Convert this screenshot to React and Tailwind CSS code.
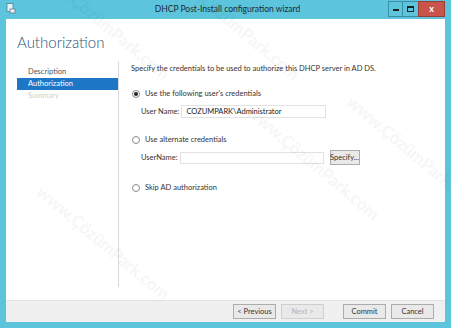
import React from 'react';

const font = { fontFamily: 'Lato, "Open Sans", sans-serif' };

function Radio({ checked }) {
  return (
    <span className="w-[8px] h-[8px] rounded-full border border-[#8a8a8a] bg-white flex items-center justify-center shrink-0">
      {checked && <span className="w-[4px] h-[4px] rounded-full bg-[#222]" />}
    </span>
  );
}

function Btn({ children, disabled }) {
  return (
    <div className={`w-[43px] h-[15px] border ${disabled ? 'border-[#cfcfcf] text-[#b5b5b5]' : 'border-[#acacac] text-[#333]'} bg-[#e9e9e9] flex items-center justify-center text-[7.5px]`}>
      {children}
    </div>
  );
}

export default function App() {
  const marks = [
    { x: 20, y: 10 }, { x: 150, y: 10 }, { x: 230, y: 150 }, { x: 330, y: 140 }, { x: 20, y: 230 },
  ];

  return (
    <div className="w-[451px] h-[328px] bg-[#5cc4dd] flex flex-col px-[6px] pb-[6px] relative overflow-hidden" style={font}>
      {/* title bar */}
      <div className="h-[19px] flex items-center relative shrink-0">
        <svg width="10" height="11" viewBox="0 0 10 11" className="absolute left-[0px] top-[3px]">
          <rect x="1" y="0.5" width="6" height="8" fill="#dff3f8" stroke="#5a7f8c" strokeWidth="0.8" />
          <rect x="4" y="6" width="5" height="4" fill="#eef" stroke="#5a7f8c" strokeWidth="0.8" />
        </svg>
        <div className="flex-1 text-center text-[8.5px] text-[#1b2b33] pl-[4px]">DHCP Post-Install configuration wizard</div>
        <div className="absolute right-0 top-[1px] flex h-[16px]">
          <div className="w-[15px] border border-[#3d8ea3] flex items-end justify-center pb-[5px]">
            <span className="w-[6px] h-[2px] bg-[#222]" />
          </div>
          <div className="w-[15px] border-y border-[#3d8ea3] flex items-center justify-center">
            <span className="w-[7px] h-[6px] border-[1.5px] border-[#222] border-t-2" />
          </div>
          <div className="w-[27px] bg-[#c9544b] border border-[#9b3c35] flex items-center justify-center text-[9px] font-bold text-[#fff]">x</div>
        </div>
      </div>

      <div className="flex-1 bg-white flex flex-col">
        <div className="h-[43px] pl-[11px] pt-[13px] shrink-0">
          <div className="text-[15px] font-light text-[#2c5379] leading-[20px]">Authorization</div>
        </div>

        <div className="flex-1 flex">
          <div className="w-[112px] pl-[11px] pt-[4px] flex flex-col text-[7.5px]">
            <div className="h-[12px] flex items-center pl-[11px] text-[#555]">Description</div>
            <div className="h-[12px] flex items-center pl-[11px] bg-[#1e76c6] text-white">Authorization</div>
            <div className="h-[12px] flex items-center pl-[11px] text-[#cfcfcf]">Summary</div>
          </div>
          <div className="w-px bg-[#d8d8d8] mb-[13px]" />
          <div className="flex-1 pl-[12px] pt-[2px] text-[7.5px] text-[#333] flex flex-col whitespace-nowrap">
            <div className="h-[10px] flex items-center">Specify the credentials to be used to authorize this DHCP server in AD DS.</div>

            <div className="mt-[15px] h-[10px] flex items-center gap-[5px] pl-[1px]">
              <Radio checked />
              <span>Use the following user's credentials</span>
            </div>
            <div className="mt-[6px] flex items-center pl-[10px]">
              <span className="mr-[2px]">User Name:</span>
              <div className="w-[145px] h-[13px] border border-[#e2e2e2] flex items-center pl-[4px] text-[#222]">COZUMPARK\Administrator</div>
            </div>

            <div className="mt-[17px] h-[10px] flex items-center gap-[5px] pl-[1px]">
              <Radio />
              <span>Use alternate credentials</span>
            </div>
            <div className="mt-[5px] flex items-center pl-[10px]">
              <span className="mr-[2px]">UserName:</span>
              <div className="w-[144px] h-[12px] border border-[#e2e2e2]" />
              <div className="ml-[6px] w-[30px] h-[15px] border border-[#acacac] bg-[#e9e9e9] flex items-center justify-center">Specify...</div>
            </div>

            <div className="mt-[18px] h-[10px] flex items-center gap-[5px] pl-[1px]">
              <Radio />
              <span>Skip AD authorization</span>
            </div>
          </div>
        </div>

        <div className="h-[22px] bg-[#f0f0f0] border-t border-[#e3e3e3] flex items-center justify-end pr-[11px] shrink-0">
          <Btn>&lt; Previous</Btn>
          <div className="ml-[5px]"><Btn disabled>Next &gt;</Btn></div>
          <div className="ml-[19px]"><Btn>Commit</Btn></div>
          <div className="ml-[5px]"><Btn>Cancel</Btn></div>
        </div>
      </div>

      {/* watermark */}
      {marks.map((m, i) => (
        <div key={i} className="absolute text-[17px] font-bold text-[#000] opacity-[0.03] whitespace-nowrap rotate-[40deg] pointer-events-none"
          style={{ left: m.x, top: m.y }}>
          www.ÇözümPark.com
        </div>
      ))}
    </div>
  );
}
